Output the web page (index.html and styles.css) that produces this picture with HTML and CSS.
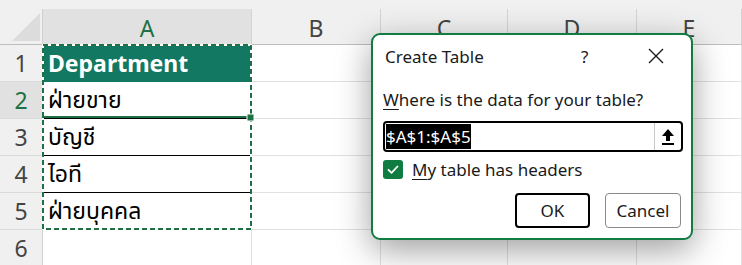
FILE: index.html
```html
<!DOCTYPE html>
<html>
<head>
    <meta charset="UTF-8">
    <title>Create Table</title>
    <link rel="stylesheet" href="styles.css">
</head>
<body>
<div class="sheet">
    <div class="strip"></div>
    <div class="grid">
        <div class="corner">
            <svg width="43" height="36" viewBox="0 0 43 36"><polygon points="40,4 40,32 12,32" fill="#dcdcdc"/></svg>
        </div>
        <div class="col-head active">A</div>
        <div class="col-head">B</div>
        <div class="col-head">C</div>
        <div class="col-head">D</div>
        <div class="col-head">E</div>

        <div class="row-head">1</div>
        <div class="cell head-cell">Department</div>
        <div class="cell"></div><div class="cell"></div><div class="cell"></div><div class="cell"></div>

        <div class="row-head active">2</div>
        <div class="cell body-cell">ฝ่ายขาย</div>
        <div class="cell"></div><div class="cell"></div><div class="cell"></div><div class="cell"></div>

        <div class="row-head">3</div>
        <div class="cell body-cell">บัญชี</div>
        <div class="cell"></div><div class="cell"></div><div class="cell"></div><div class="cell"></div>

        <div class="row-head">4</div>
        <div class="cell body-cell">ไอที</div>
        <div class="cell"></div><div class="cell"></div><div class="cell"></div><div class="cell"></div>

        <div class="row-head">5</div>
        <div class="cell body-cell last">ฝ่ายบุคคล</div>
        <div class="cell"></div><div class="cell"></div><div class="cell"></div><div class="cell"></div>

        <div class="row-head">6</div>
        <div class="cell"></div>
        <div class="cell"></div><div class="cell"></div><div class="cell"></div><div class="cell"></div>
    </div>

    <svg class="ants" width="214" height="190" viewBox="0 0 214 190">
        <rect x="2" y="2" width="208" height="184" fill="none" stroke="#ffffff" stroke-width="2"/>
        <rect x="2" y="2" width="208" height="184" fill="none" stroke="#1e7145" stroke-width="2" stroke-dasharray="5 3"/>
        <line x1="1" y1="74" x2="209" y2="74" stroke="#1e7145" stroke-width="2"/>
        <rect x="206" y="71" width="7" height="7" fill="#1e7145" stroke="#ffffff" stroke-width="1"/>
    </svg>
</div>

<div class="dialog">
    <div class="title-bar">
        <span class="title">Create Table</span>
        <span class="help">?</span>
        <svg class="close" width="16" height="16" viewBox="0 0 16 16"><path d="M1 1 L15 15 M15 1 L1 15" stroke="#1a1a1a" stroke-width="1.4"/></svg>
    </div>
    <div class="prompt"><u>W</u>here is the data for your table?</div>
    <div class="range-box">
        <div class="range-text"><span class="selected">$A$1:$A$5</span></div>
        <div class="collapse">
            <svg width="14" height="18" viewBox="0 0 14 18"><path d="M7 1 L13 8 L9 8 L9 13 L5 13 L5 8 L1 8 Z" fill="#000"/><rect x="1" y="15" width="12" height="2" fill="#000"/></svg>
        </div>
    </div>
    <div class="check-row">
        <span class="checkbox">
            <svg width="20" height="19" viewBox="0 0 20 19"><path d="M5.5 9.8 L8.5 12.8 L14.5 6.5" fill="none" stroke="#fff" stroke-width="1.8" stroke-linecap="round" stroke-linejoin="round"/></svg>
        </span>
        <span class="check-label"><u>M</u>y table has headers</span>
    </div>
    <div class="buttons">
        <button class="btn primary">OK</button>
        <button class="btn">Cancel</button>
    </div>
</div>
</body>
</html>
```

FILE: styles.css
```css
body {
    margin: 0;
    width: 742px;
    height: 265px;
    overflow: hidden;
    background: #ffffff;
    font-family: "Noto Sans", "Noto Sans Thai", "Open Sans", sans-serif;
    position: relative;
}

.sheet {
    position: relative;
    height: 265px;
    overflow: hidden;
}

.strip {
    height: 9px;
    background: #f0f0f0;
}

.grid {
    display: grid;
    grid-template-columns: 43px 209px 129px 127px 129px 105px;
    grid-template-rows: 36px repeat(6, 37px);
}

.corner {
    background: #f0f0f0;
    border-right: 1px solid #d0d0d0;
    border-bottom: 1px solid #bdbdbd;
    box-sizing: border-box;
}

.corner svg {
    display: block;
}

.col-head {
    background: #f0f0f0;
    border-right: 1px solid #d4d4d4;
    border-bottom: 1px solid #bdbdbd;
    box-sizing: border-box;
    display: flex;
    align-items: center;
    justify-content: center;
    font-size: 23px;
    color: #444444;
    padding-top: 3px;
}

.col-head.active {
    background: #e1e1e1;
    color: #1e7145;
}

.row-head {
    background: #f0f0f0;
    border-right: 1px solid #d0d0d0;
    border-bottom: 1px solid #dadada;
    box-sizing: border-box;
    display: flex;
    align-items: center;
    justify-content: center;
    font-size: 23px;
    color: #444444;
}

.row-head.active {
    background: #e1e1e1;
    color: #1e7145;
}

.cell {
    border-right: 1px solid #e1e1e1;
    border-bottom: 1px solid #e1e1e1;
    box-sizing: border-box;
    display: flex;
    align-items: center;
    padding-left: 5px;
    font-size: 23px;
    color: #000000;
}

.head-cell {
    background: #137862;
    color: #ffffff;
    font-weight: 700;
    font-size: 23px;
    border-bottom-color: #137862;
}

.body-cell {
    border-bottom-color: #000000;
}

.body-cell.last {
    border-bottom-color: #e1e1e1;
}

.ants {
    position: absolute;
    left: 41px;
    top: 43px;
}

.dialog {
    position: absolute;
    left: 371px;
    top: 33px;
    width: 322px;
    height: 207px;
    box-sizing: border-box;
    border: 2px solid #107c41;
    border-radius: 9px;
    background: #ffffff;
    box-shadow: 0 10px 34px rgba(0, 0, 0, 0.38);
    padding: 0 9px 0 10px;
    color: #1a1a1a;
    font-size: 17px;
}

.title-bar {
    display: flex;
    align-items: center;
    height: 42px;
    padding-left: 2px;
}

.title {
    flex: 1;
}

.help {
    width: 20px;
    margin-right: 47px;
}

.close {
    margin-right: 18px;
}

.prompt {
    margin-top: 10px;
    height: 26px;
    line-height: 26px;
}

.prompt u,
.check-label u {
    text-underline-offset: 3px;
}

.range-box {
    margin-top: 8px;
    height: 31px;
    width: 300px;
    box-sizing: border-box;
    border: 2px solid #000000;
    border-radius: 4px;
    display: flex;
}

.range-text {
    flex: 1;
    padding: 1px 0 0 1px;
}

.selected {
    display: inline-block;
    background: #000000;
    color: #ffffff;
    line-height: 25px;
    height: 25px;
}

.collapse {
    width: 26px;
    border-left: 1px solid #c8c8c8;
    display: flex;
    align-items: center;
    justify-content: center;
}

.collapse svg {
    display: block;
}

.check-row {
    display: flex;
    align-items: center;
    margin-top: 7px;
    height: 20px;
}

.checkbox {
    width: 20px;
    height: 19px;
    border-radius: 3px;
    background: #107c41;
    margin-right: 9px;
}

.checkbox svg {
    display: block;
}

.buttons {
    display: flex;
    justify-content: flex-end;
    gap: 15px;
    margin-top: 14px;
    padding-right: 1px;
}

.btn {
    width: 76px;
    height: 35px;
    box-sizing: border-box;
    border: 1px solid #8a8a8a;
    border-radius: 4px;
    background: #ffffff;
    font-family: "Noto Sans", "Open Sans", sans-serif;
    font-size: 17px;
    color: #1a1a1a;
    padding: 0;
}

.btn.primary {
    width: 75px;
    border: 2px solid #000000;
}
```
